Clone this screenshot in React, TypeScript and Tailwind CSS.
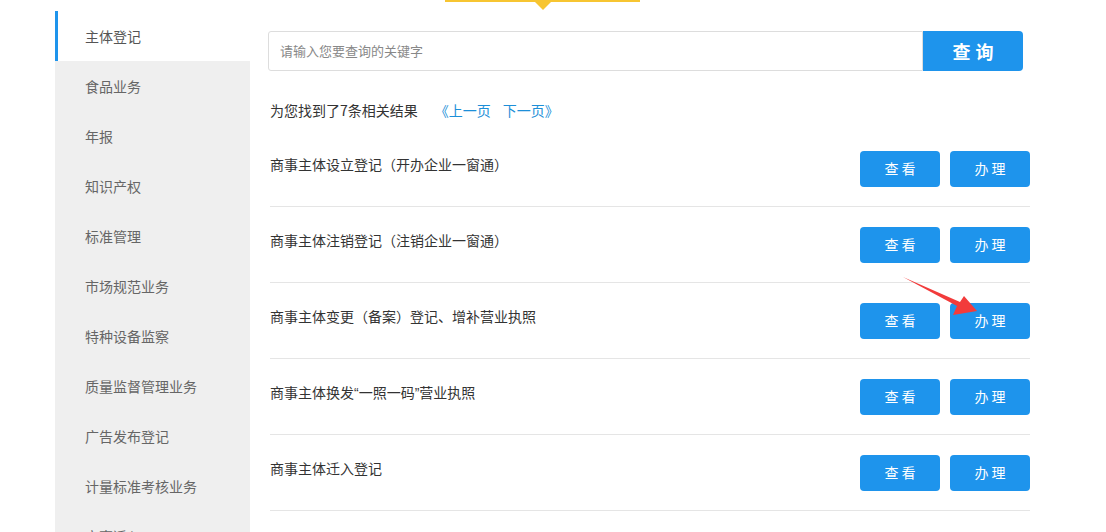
import React from "react";

const sideItems = [
  "食品业务",
  "年报",
  "知识产权",
  "标准管理",
  "市场规范业务",
  "特种设备监察",
  "质量监督管理业务",
  "广告发布登记",
  "计量标准考核业务",
  "商事迁入",
];

const rows: React.ReactNode[] = [
  "商事主体设立登记（开办企业一窗通）",
  "商事主体注销登记（注销企业一窗通）",
  "商事主体变更（备案）登记、增补营业执照",
  <>
    商事主体换发
    <span style={{ fontFamily: '"Liberation Sans", sans-serif' }}>“</span>
    一照一码
    <span style={{ fontFamily: '"Liberation Sans", sans-serif' }}>”</span>
    营业执照
  </>,
  "商事主体迁入登记",
];

export default function App() {
  return (
    <div
      className="relative w-[1106px] h-[532px] overflow-hidden bg-white"
      style={{ fontFamily: '"Noto Sans CJK SC", "Noto Sans", sans-serif' }}
    >
      <div className="flex pl-[55px] h-full">
        {/* Sidebar */}
        <div className="w-[195px] pt-[11px] flex flex-col h-full">
          <div className="h-[50px] shrink-0 border-l-[3px] border-[#1e94ec] bg-white flex items-center pl-[27px] text-[14px] text-[#555]">
            主体登记
          </div>
          <div className="flex-1 min-h-0 overflow-hidden bg-[#efefef]">
            {sideItems.map((t) => (
              <div
                key={t}
                className="h-[50px] flex items-center pl-[30px] text-[14px] text-[#666]"
              >
                {t}
              </div>
            ))}
          </div>
        </div>

        {/* Main */}
        <div className="ml-[18px] w-[762px] flex flex-col">
          <div className="relative ml-[177px] w-[195px] h-[2px] bg-[#f7c531]">
            <div className="absolute left-[89px] top-[1px] w-0 h-0 border-l-[9px] border-r-[9px] border-t-[9px] border-l-transparent border-r-transparent border-t-[#f7c531]" />
          </div>

          <div className="mt-[29px] flex w-[755px] h-[40px]">
            <div className="flex-1 border border-[#dddddd] rounded-l-[3px] flex items-center pl-[11px] text-[13px] text-[#888]">
              请输入您要查询的关键字
            </div>
            <div className="w-[100px] bg-[#1e94ec] rounded-r-[4px] flex items-center justify-center text-white text-[18px] font-bold tracking-[5px] pl-[5px]">
              查询
            </div>
          </div>

          <div className="mt-[29px] ml-[2px] h-[20px] flex items-center text-[14px] text-[#333]">
            <span>为您找到了7条相关结果</span>
            <span className="ml-[17px] text-[#1d8fd8]">《上一页</span>
            <span className="ml-[12px] text-[#1d8fd8]">下一页》</span>
          </div>

          <div className="mt-[11px] ml-[2px] w-[760px] flex flex-col">
            {rows.map((r, i) => (
              <div
                key={i}
                className="h-[76px] border-b border-[#e5e5e5] flex items-start justify-between"
              >
                <div className="pt-[23px] leading-[20px] text-[14px] text-[#333]">
                  {r}
                </div>
                <div className="flex gap-[10px] mt-[20px]">
                  <div className="w-[80px] h-[36px] rounded-[4px] bg-[#1e94ec] text-white text-[14px] flex items-center justify-center tracking-[3px] pl-[3px] pb-[1px]">
                    查看
                  </div>
                  <div className="w-[80px] h-[36px] rounded-[4px] bg-[#1e94ec] text-white text-[14px] flex items-center justify-center tracking-[3px] pl-[3px] pb-[1px]">
                    办理
                  </div>
                </div>
              </div>
            ))}
          </div>
        </div>
      </div>

      {/* red annotation arrow */}
      <svg
        className="absolute left-0 top-0 pointer-events-none"
        width="1106"
        height="532"
      >
        <polygon
          points="903,277 960,302 964,296 977,311 953,315 957,306"
          fill="#f23b3b"
        />
      </svg>
    </div>
  );
}
